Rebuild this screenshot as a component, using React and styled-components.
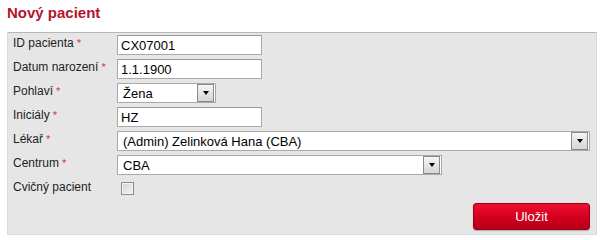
import React from 'react';
import styled, { createGlobalStyle } from 'styled-components';

const GlobalStyle = createGlobalStyle`
  body {
    margin: 0;
    background: #ffffff;
    font-family: "Liberation Sans", Arial, sans-serif;
  }
`;

const Page = styled.div`
  width: 603px;
  height: 240px;
  padding: 0 6px 0 7px;
  box-sizing: border-box;
`;

const Title = styled.h2`
  margin: 0;
  padding-top: 3px;
  height: 32px;
  box-sizing: border-box;
  font-size: 15px;
  line-height: 20px;
  font-weight: bold;
  color: #b3142c;
`;

const Panel = styled.div`
  background: #e6e6e6;
  border: 1px solid #dadada;
  border-top-color: #b8b8b8;
  padding: 2px 6px 4px 5px;
  display: flex;
  flex-direction: column;
`;

const Row = styled.div`
  display: grid;
  grid-template-columns: 104px 1fr;
  align-items: start;
  height: 24px;
`;

const Label = styled.label`
  font-size: 12px;
  line-height: 14px;
  padding-top: 1px;
  color: #1e1e1e;
  white-space: nowrap;
`;

const Required = styled.span`
  color: #d8324a;
  font-size: 11px;
  margin-left: 3px;
`;

const TextInput = styled.input`
  width: ${p => p.$w}px;
  height: 20px;
  box-sizing: border-box;
  border: 1px solid #a9a9a9;
  border-top-color: #9a9a9a;
  background: #fff;
  padding: 0 3px;
  font-family: "Liberation Sans", Arial, sans-serif;
  font-size: 13px;
  color: #000;
  outline: none;
`;

const SelectBox = styled.div`
  width: ${p => p.$w}px;
  height: 20px;
  box-sizing: border-box;
  border: 1px solid #a9a9a9;
  background: #fff;
  display: flex;
  align-items: center;
  justify-content: space-between;
  padding: 0 1px 0 5px;
  font-size: 13px;
  color: #000;
`;

const Arrow = styled.span`
  width: 17px;
  height: 18px;
  box-sizing: border-box;
  border: 1px solid #8a8a8a;
  background: linear-gradient(#f4f4f4, #d6d6d6);
  display: flex;
  align-items: center;
  justify-content: center;
  &::after {
    content: '';
    border-left: 3.5px solid transparent;
    border-right: 3.5px solid transparent;
    border-top: 4px solid #000;
  }
`;

const Check = styled.span`
  display: block;
  width: 13px;
  height: 13px;
  margin: 3px 0 0 4px;
  box-sizing: border-box;
  border: 1px solid #8e8e8e;
  background: linear-gradient(135deg, #d4d4d4, #f6f6f6);
  box-shadow: inset 0 0 0 1px #f2f2f2;
`;

const Actions = styled.div`
  display: flex;
  justify-content: flex-end;
`;

const SaveButton = styled.button`
  width: 117px;
  height: 27px;
  border: 1px solid #9c0016;
  border-radius: 3px;
  background: linear-gradient(#ec1030, #d5001e 50%, #b30018);
  color: #fff;
  font-family: "Liberation Sans", Arial, sans-serif;
  font-size: 13px;
  box-shadow: 0 1px 1px rgba(0, 0, 0, 0.25);
  cursor: pointer;
`;

const Select = ({ w, value }) => (
  <SelectBox $w={w}>
    <span>{value}</span>
    <Arrow />
  </SelectBox>
);

const Field = ({ label, required, children }) => (
  <Row>
    <Label>
      {label}
      {required && <Required>*</Required>}
    </Label>
    <div>{children}</div>
  </Row>
);

export default function App() {
  return (
    <Page>
      <GlobalStyle />
      <Title>Nový pacient</Title>
      <Panel>
        <Field label="ID pacienta" required>
          <TextInput $w={145} defaultValue="CX07001" />
        </Field>
        <Field label="Datum narození" required>
          <TextInput $w={145} defaultValue="1.1.1900" />
        </Field>
        <Field label="Pohlaví" required>
          <Select w={99} value="Žena" />
        </Field>
        <Field label="Iniciály" required>
          <TextInput $w={145} defaultValue="HZ" />
        </Field>
        <Field label="Lékař" required>
          <Select w={473} value="(Admin) Zelinková Hana (CBA)" />
        </Field>
        <Field label="Centrum" required>
          <Select w={325} value="CBA" />
        </Field>
        <Field label="Cvičný pacient">
          <Check />
        </Field>
        <Actions>
          <SaveButton>Uložit</SaveButton>
        </Actions>
      </Panel>
    </Page>
  );
}
